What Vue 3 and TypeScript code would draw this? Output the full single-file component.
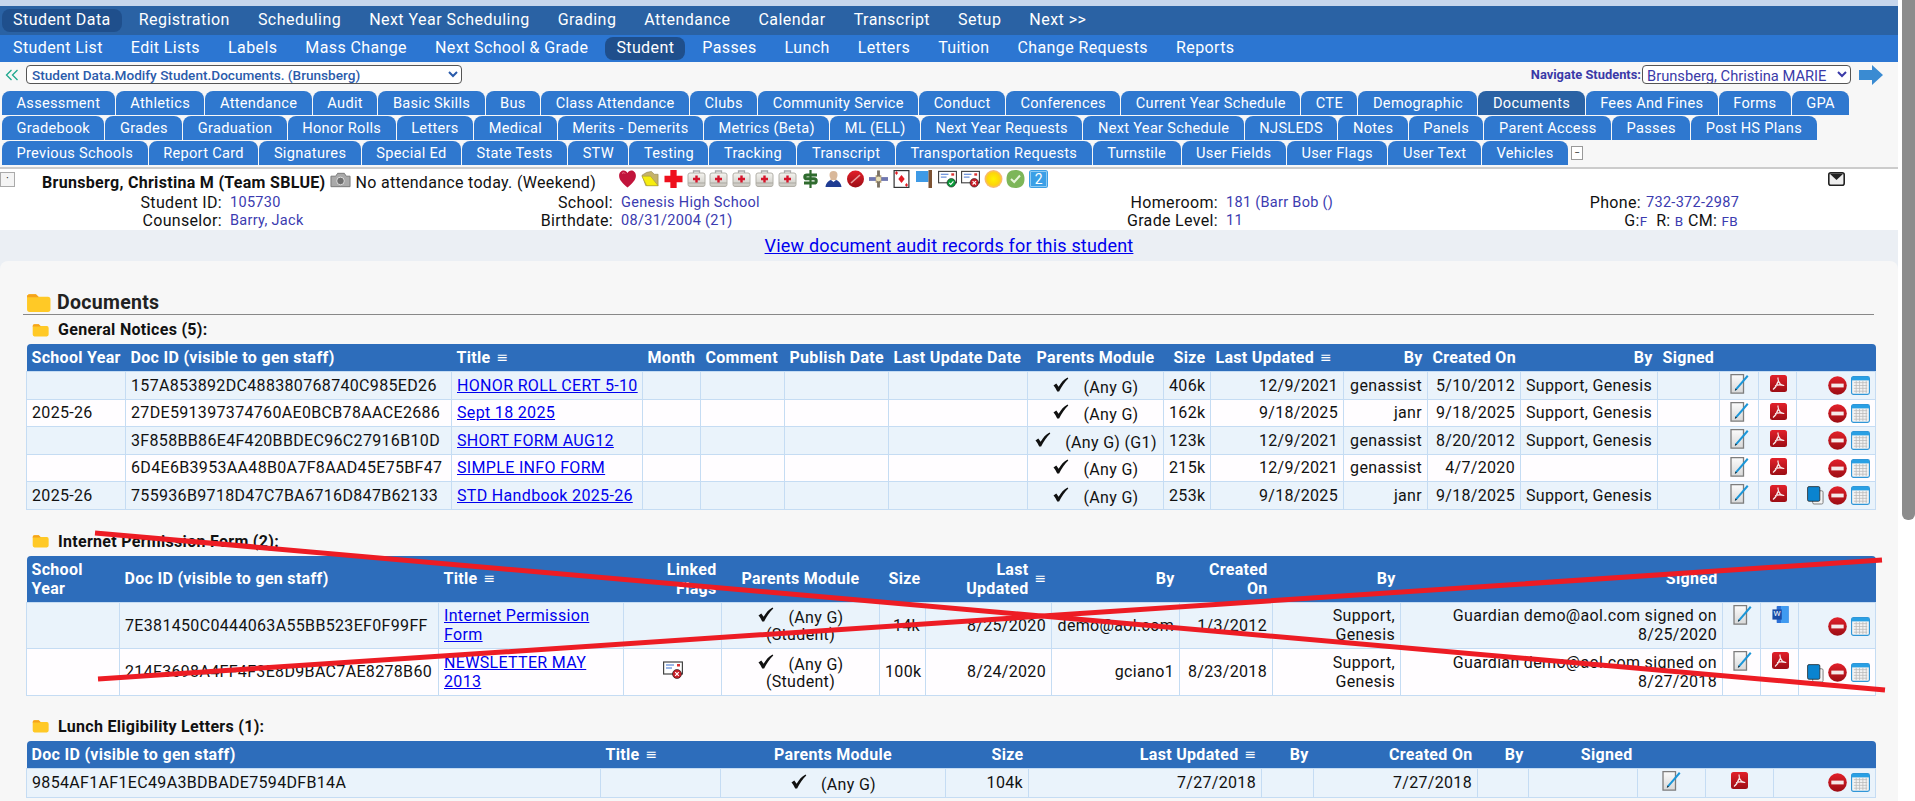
<script setup lang="ts">
type Cell = { t?: string; link?: boolean; parents?: string; extra?: string; shift?: boolean; icons?: string[]; flag?: boolean }
type Col = { label: string; w: number; h?: string; b?: string; sort?: boolean }
type DocTable = { name: string; cols: Col[]; rows: Cell[][]; cls: string }

const nav1 = ['Student Data', 'Registration', 'Scheduling', 'Next Year Scheduling', 'Grading', 'Attendance', 'Calendar', 'Transcript', 'Setup', 'Next >>']
const nav2 = ['Student List', 'Edit Lists', 'Labels', 'Mass Change', 'Next School & Grade', 'Student', 'Passes', 'Lunch', 'Letters', 'Tuition', 'Change Requests', 'Reports']
const tabRows = [
  ['Assessment', 'Athletics', 'Attendance', 'Audit', 'Basic Skills', 'Bus', 'Class Attendance', 'Clubs', 'Community Service', 'Conduct', 'Conferences', 'Current Year Schedule', 'CTE', 'Demographic', 'Documents', 'Fees And Fines', 'Forms', 'GPA'],
  ['Gradebook', 'Grades', 'Graduation', 'Honor Rolls', 'Letters', 'Medical', 'Merits - Demerits', 'Metrics (Beta)', 'ML (ELL)', 'Next Year Requests', 'Next Year Schedule', 'NJSLEDS', 'Notes', 'Panels', 'Parent Access', 'Passes', 'Post HS Plans'],
  ['Previous Schools', 'Report Card', 'Signatures', 'Special Ed', 'State Tests', 'STW', 'Testing', 'Tracking', 'Transcript', 'Transportation Requests', 'Turnstile', 'User Fields', 'User Flags', 'User Text', 'Vehicles'],
]
const flagIcons = ['heart', 'folderY', 'cross', 'kit', 'kit', 'kit', 'kit', 'kit', 'dollar', 'person', 'nope', 'sat', 'card', 'flag', 'mailOk', 'mailNo', 'sun', 'okay', 'two']

const t = (s = ''): Cell => ({ t: s })
const a = (s: string): Cell => ({ t: s, link: true })
const p = (extra = '', shift = false): Cell => ({ parents: '(Any G)' + (shift ? ' (G1)' : ''), extra })
const ic = (...n: string[]): Cell => ({ icons: n })

const std = (yr: string, id: string, title: string, par: Cell, size: string, lu: string, by: string, co: string, by2: string, copy = false): Cell[] => [
  t(yr), t(id), a(title), t(), t(), t(), t(), par, t(size), t(lu), t(by), t(co), t(by2), t(),
  ic('edit'), ic('pdf'), ic(...(copy ? ['copy', 'minus', 'cal'] : ['minus', 'cal'])),
]

const tables: DocTable[] = [
  {
    name: 'General Notices (5):',
    cls: 'first',
    cols: [
      { label: 'School Year', w: 99 }, { label: 'Doc ID (visible to gen staff)', w: 326 }, { label: 'Title', w: 191, sort: true },
      { label: 'Month', w: 58 }, { label: 'Comment', w: 84 }, { label: 'Publish Date', w: 104 }, { label: 'Last Update Date', w: 139 },
      { label: 'Parents Module', w: 136, h: 'c', b: 'c' }, { label: 'Size', w: 47, h: 'r', b: 'r' }, { label: 'Last Updated', w: 133, b: 'r', sort: true },
      { label: 'By', w: 84, h: 'r', b: 'r' }, { label: 'Created On', w: 93, b: 'r' }, { label: 'By', w: 137, h: 'r' }, { label: 'Signed', w: 62 },
      { label: '', w: 39 }, { label: '', w: 38 }, { label: '', w: 79, b: 'r' },
    ],
    rows: [
      std('', '157A853892DC488380768740C985ED26', 'HONOR ROLL CERT 5-10', p(), '406k', '12/9/2021', 'genassist', '5/10/2012', 'Support, Genesis'),
      std('2025-26', '27DE591397374760AE0BCB78AACE2686', 'Sept 18 2025', p(), '162k', '9/18/2025', 'janr', '9/18/2025', 'Support, Genesis'),
      std('', '3F858BB86E4F420BBDEC96C27916B10D', 'SHORT FORM AUG12', p('', true), '123k', '12/9/2021', 'genassist', '8/20/2012', 'Support, Genesis'),
      std('', '6D4E6B3953AA48B0A7F8AAD45E75BF47', 'SIMPLE INFO FORM', p(), '215k', '12/9/2021', 'genassist', '4/7/2020', ''),
      std('2025-26', '755936B9718D47C7BA6716D847B62133', 'STD Handbook 2025-26', p(), '253k', '9/18/2025', 'janr', '9/18/2025', 'Support, Genesis', true),
    ],
  },
  {
    name: 'Internet Permission Form (2):',
    cls: 'second',
    cols: [
      { label: 'School\nYear', w: 93 }, { label: 'Doc ID (visible to gen staff)', w: 319 }, { label: 'Title', w: 185, sort: true },
      { label: 'Linked\nFlags', w: 98, h: 'r', b: 'c' }, { label: 'Parents Module', w: 158, h: 'c', b: 'c' }, { label: 'Size', w: 46, h: 'r', b: 'r' },
      { label: 'Last\nUpdated', w: 126, h: 'r', b: 'r', sort: true }, { label: 'By', w: 128, h: 'r', b: 'r' }, { label: 'Created\nOn', w: 93, h: 'r', b: 'r' },
      { label: 'By', w: 128, h: 'r', b: 'r' }, { label: 'Signed', w: 322, h: 'r', b: 'r' }, { label: '', w: 38 }, { label: '', w: 38 }, { label: '', w: 77, b: 'r' },
    ],
    rows: [
      [t(), t('7E381450C0444063A55BB523EF0F99FF'), a('Internet Permission Form'), t(), p('(Student)'), t('14k'), t('8/25/2020'), t('demo@aol.com'), t('1/3/2012'), t('Support, Genesis'), t('Guardian demo@aol.com signed on 8/25/2020'), ic('edit'), ic('word'), ic('minus', 'cal')],
      [t(), t('214F3698A4FF4F3E8D9BAC7AE8278B60'), a('NEWSLETTER MAY 2013'), { flag: true }, p('(Student)'), t('100k'), t('8/24/2020'), t('gciano1'), t('8/23/2018'), t('Support, Genesis'), t('Guardian demo@aol.com signed on 8/27/2018'), ic('edit'), ic('pdf'), ic('copy', 'minus', 'cal')],
    ],
  },
  {
    name: 'Lunch Eligibility Letters (1):',
    cls: 'third',
    cols: [
      { label: 'Doc ID (visible to gen staff)', w: 574 }, { label: 'Title', w: 120, sort: true }, { label: 'Parents Module', w: 225, h: 'c', b: 'c' },
      { label: 'Size', w: 83, h: 'r', b: 'r' }, { label: 'Last Updated', w: 233, h: 'r', b: 'r', sort: true }, { label: 'By', w: 52, h: 'r' },
      { label: 'Created On', w: 164, h: 'r', b: 'r' }, { label: 'By', w: 51, h: 'r' }, { label: 'Signed', w: 109, h: 'r' },
      { label: '', w: 68, b: 'c' }, { label: '', w: 68, b: 'c' }, { label: '', w: 102, b: 'r' },
    ],
    rows: [
      [t('9854AF1AF1EC49A3BDBADE7594DFB14A'), t(), p(), t('104k'), t('7/27/2018'), t(), t('7/27/2018'), t(), t(), ic('edit'), ic('pdf'), ic('minus', 'cal')],
    ],
  },
]
</script>

<template>
  <div class="shell">
    <svg class="sprites" aria-hidden="true">
      <defs>
        <linearGradient id="gRed" x1="0" y1="0" x2="0" y2="1"><stop offset="0" stop-color="#e2202a" /><stop offset="1" stop-color="#9c0d14" /></linearGradient>
        <linearGradient id="gKit" x1="0" y1="0" x2="0" y2="1"><stop offset="0" stop-color="#f4f4f0" /><stop offset="1" stop-color="#c9c7c0" /></linearGradient>
        <linearGradient id="gGray" x1="0" y1="0" x2="0" y2="1"><stop offset="0" stop-color="#fbfbfb" /><stop offset="1" stop-color="#d8d8d8" /></linearGradient>
        <radialGradient id="gSun"><stop offset="0" stop-color="#fff200" /><stop offset=".7" stop-color="#fdd40c" /><stop offset="1" stop-color="#f6b38c" /></radialGradient>
      </defs>
      <symbol id="heart" viewBox="0 0 18 18"><path d="M9 17.5C4 13 .6 10 .6 5.7.6 2.6 3 .6 5.2.6 6.900 .6 8.200 1.500 9 3c.8-1.500 2.100-2.400 3.800-2.400 2.200 0 4.600 2 4.600 5.100C17.400 10 14 13 9 17.500z" fill="#c1143b" /><path d="M3.500 3.500c1-1 2.500-1 3 0" stroke="#ef7a90" fill="none" /></symbol>
      <symbol id="folderY" viewBox="0 0 20 18"><path d="M1 5l5-3 5-1 3 3h4v12H5z" fill="#c4b26a" stroke="#8e8250" stroke-width=".6" /><path d="M1 6h9l8 10H6z" fill="#f7ee0f" stroke="#a69a2c" stroke-width=".6" /></symbol>
      <symbol id="cross" viewBox="0 0 20 20"><path d="M6.500 0h7v6.500H20v7h-6.500V20h-7v-6.500H0v-7h6.500z" fill="#ee0f1c" /></symbol>
      <symbol id="kit" viewBox="0 0 18 18"><path d="M6 3V1h6v2" fill="none" stroke="#aaa" stroke-width="1.300" /><rect x=".5" y="3" width="17" height="13.500" rx="2" fill="url(#gKit)" stroke="#b2b0a8" /><path d="M.5 13h17" stroke="#a9a79f" /><path d="M7.800 5.500h2.400v2.300h2.300v2.400h-2.300v2.300H7.800v-2.300H5.500V7.800h2.300z" fill="#d5152b" /></symbol>
      <symbol id="dollar" viewBox="0 0 18 18"><path d="M9 0v18" stroke="#2f6b2e" stroke-width="2.200" /><path d="M15.500 5H5.500c-3 0-3 3.800 0 3.800h7c3 0 3 4.200 0 4.200H2.500" fill="none" stroke="#2f6b2e" stroke-width="3" /></symbol>
      <symbol id="person" viewBox="0 0 16 18"><circle cx="8" cy="5" r="4" fill="#d9b89a" /><path d="M5 7h6v3H5z" fill="#d9b89a" /><path d="M0 17c.5-4 3-6.500 5.500-7L8 12l2.500-2c2.500.5 5 3 5.500 7z" fill="#1f3c93" /></symbol>
      <symbol id="nope" viewBox="0 0 18 18"><circle cx="9" cy="9" r="8.500" fill="url(#gRed)" /><path d="M4.500 13L13.500 5" stroke="#e9a0a0" stroke-width="1.600" /></symbol>
      <symbol id="sat" viewBox="0 0 20 18"><rect x="0" y="7" width="20" height="4" fill="#6f77b0" /><rect x="7" y="5" width="6" height="8" fill="#b5a27a" /><rect x="8.500" y="0" width="3" height="18" fill="#7b7263" /><circle cx="10" cy="9" r="2.600" fill="#e9dfb6" /></symbol>
      <symbol id="card" viewBox="0 0 16 18"><rect x=".6" y=".6" width="14.800" height="16.800" fill="#fff" stroke="#333" stroke-width="1.200" /><path d="M8 5l3.200 4L8 13 4.800 9z" fill="#e31b23" /><path d="M3 1l1.500 2L3 5 1.500 3zM13 13l1.500 2-1.500 2-1.500-2z" fill="#e31b23" /></symbol>
      <symbol id="flag" viewBox="0 0 18 18"><rect x=".5" y="1" width="12.500" height="11" fill="#3e9ae6" /><rect x="13" y="0" width="3.500" height="18" fill="#7c5233" /></symbol>
      <symbol id="mailOk" viewBox="0 0 20 18"><rect x=".6" y="1" width="18.800" height="12" fill="#fff" stroke="#444" stroke-width="1.200" /><path d="M3 4h8M3 7h6" stroke="#3b6fd0" /><rect x="14" y="3" width="3" height="2.500" fill="#d33" /><circle cx="14" cy="13" r="4.500" fill="#0b9a3a" stroke="#111" stroke-width=".6" /><path d="M11.800 13l1.600 1.600 2.800-3" stroke="#fff" fill="none" stroke-width="1.200" /></symbol>
      <symbol id="mailNo" viewBox="0 0 20 18"><rect x=".6" y="1" width="18.800" height="12" fill="#fff" stroke="#444" stroke-width="1.200" /><path d="M3 4h8M3 7h6" stroke="#3b6fd0" /><rect x="14" y="3" width="3" height="2.500" fill="#d33" /><circle cx="14" cy="13" r="4.500" fill="#c81e28" stroke="#111" stroke-width=".6" /><path d="M12.200 11.200l3.600 3.600m0-3.600l-3.600 3.600" stroke="#fff" stroke-width="1.200" /></symbol>
      <symbol id="sun" viewBox="0 0 18 18"><circle cx="9" cy="9" r="9" fill="url(#gSun)" /></symbol>
      <symbol id="okay" viewBox="0 0 18 18"><path d="M9 0c6 0 9 3 9 9s-3 9-9 9-9-3-9-9 3-9 9-9z" fill="#7db659" /><path d="M4.500 9l3.200 3 5.800-6.500" stroke="#e8f5dc" stroke-width="2" fill="none" /></symbol>
      <symbol id="two" viewBox="0 0 19 18"><rect width="19" height="18" rx="2.500" fill="#3b9fe6" /><path d="M1.500 1.500h16v15h-16z" fill="none" stroke="#8fcbf3" /></symbol>
      <symbol id="camera" viewBox="0 0 22 18"><path d="M1 5h5l2-3h7l2 3h4v11H1z" fill="#a9a9a9" stroke="#777" /><circle cx="11" cy="10" r="4" fill="#6f6f6f" stroke="#ddd" /></symbol>
      <symbol id="envelope" viewBox="0 0 17 14"><rect x=".8" y=".8" width="15.400" height="12.400" rx="2" fill="#eee" stroke="#222" stroke-width="1.600" /><path d="M1.500 1.500h14L8.500 8z" fill="#222" /></symbol>
      <symbol id="edit" viewBox="0 0 20 20"><path d="M1 .7h12.500v18.500H1z" fill="url(#gGray)" stroke="#7d7d7d" stroke-width="1.300" /><path d="M5.500 14.500l-.7 2.300 2.200-1L18.500 2.500 17 1z" fill="#1b96d8" /><path d="M4.800 16.800l.7-2.300 1.500 1.300z" fill="#222" /></symbol>
      <symbol id="pdf" viewBox="0 0 17 17"><rect width="17" height="17" rx="2.500" fill="url(#gRed)" /><path d="M8 2.500c-.3 2.500 1 5 2.300 6.500 1.300 1.200 3 1.200 4 1.500M8 6.500C7 10 5 13 3 14.500M5 10.500c2.500-.8 5-1 8.500-.2" fill="none" stroke="#f7e9e9" stroke-width="1.200" /></symbol>
      <symbol id="word" viewBox="0 0 19 20"><rect x="5" y="0" width="14" height="20" rx="1" fill="#2b6fd6" /><rect x="10" y="0" width="9" height="20" fill="#3f9af0" /><rect x="0" y="4" width="11" height="12" fill="#1a4da6" /></symbol>
      <symbol id="minus" viewBox="0 0 20 20"><circle cx="10" cy="10" r="9.800" fill="url(#gRed)" /><rect x="3.500" y="8" width="13" height="4" fill="#f5eaea" /></symbol>
      <symbol id="cal" viewBox="0 0 20 20"><rect x=".6" y=".6" width="18.800" height="18.800" rx="2" fill="#f3f3f3" stroke="#2f96d8" stroke-width="1.200" /><rect x="1" y="1" width="18" height="3.600" fill="#29a0e4" /><path d="M3 7h14M3 10h14M3 13h14M3 16h14M5.500 5v13M9 5v13M12.500 5v13M16 5v13" stroke="#b9b9b9" stroke-width=".8" /></symbol>
      <symbol id="copy" viewBox="0 0 18 20"><rect x="6" y="5" width="11" height="14" rx="1.500" fill="#f4f4f4" stroke="#777" /><rect x=".6" y=".6" width="13" height="15.500" rx="1.500" fill="#0a84d0" stroke="#222" stroke-width=".8" /></symbol>
      <symbol id="check" viewBox="0 0 18 16"><path d="M1.500 9l3-2 2.500 3.500C9.500 6 12.500 2.500 16.500.5l.8 1.200C13.500 5.500 10 10.500 7.500 15.500h-2C4.500 13 3 10.800 1.500 9z" fill="#111" /></symbol>
      <symbol id="folderBig" viewBox="0 0 24 18"><path d="M1 3.500A2.500 2.500 0 0 1 3.500 1h6l2.500 2.500h9A2.500 2.500 0 0 1 23.500 6v9.500a2.500 2.500 0 0 1-2.500 2.500H3.500A2.500 2.500 0 0 1 1 15.500z" fill="#ffc926" /><path d="M1 4V3.500A2.500 2.500 0 0 1 3.500 1h6l2.500 2.500v.5z" fill="#f5a31c" /></symbol>
      <symbol id="goArrow" viewBox="0 0 24 20"><path d="M0 5h13V0l11 10-11 10v-5H0z" fill="#3a8bd2" /></symbol>
      <symbol id="backArrows" viewBox="0 0 14 12"><path d="M6.500 1L1.500 6l5 5M12.500 1L7.500 6l5 5" fill="none" stroke="#1fa88e" stroke-width="1.300" /></symbol>
    </svg>

    <div class="page">
      <div class="topband"></div>
      <nav class="nav nav-one">
        <a v-for="(n, i) in nav1" :key="n" class="nav-item" :class="{ on: i === 0 }">{{ n }}</a>
      </nav>
      <nav class="nav nav-two">
        <a v-for="(n, i) in nav2" :key="n" class="nav-item" :class="{ on: i === 5 }">{{ n }}</a>
      </nav>

      <div class="crumbs">
        <svg class="back" width="14" height="12"><use href="#backArrows" /></svg>
        <select class="crumb-select"><option>Student Data.Modify Student.Documents. (Brunsberg)</option></select>
        <span class="spacer"></span>
        <label class="nav-label">Navigate Students:</label>
        <select class="student-select"><option>Brunsberg, Christina MARIE</option></select>
        <svg class="go" width="24" height="20"><use href="#goArrow" /></svg>
      </div>

      <div class="tabs">
        <div v-for="(row, r) in tabRows" :key="r" class="tab-row">
          <a v-for="tab in row" :key="tab" class="tab" :class="{ on: tab === 'Documents' }">{{ tab }}</a>
          <span v-if="r === 2" class="collapse">−</span>
        </div>
      </div>

      <section class="student">
        <span class="dotbox">·</span>
        <div class="name-line">
          <strong class="name">Brunsberg, Christina M (Team SBLUE)</strong>
          <svg class="camera" width="21" height="18"><use href="#camera" /></svg>
          <span class="attend">No attendance today. (Weekend)</span>
          <span class="flags">
            <span v-for="(f, i) in flagIcons" :key="i" class="flag-cell">
              <svg width="19" height="18"><use :href="'#' + f" /></svg>
              <b v-if="f === 'two'" class="two-num">2</b>
            </span>
          </span>
          <svg class="envelope" width="17" height="14"><use href="#envelope" /></svg>
        </div>
        <div class="facts">
          <span class="lab">Student ID:</span><span class="val">105730</span>
          <span class="lab">School:</span><span class="val">Genesis High School</span>
          <span class="lab">Homeroom:</span><span class="val">181 (Barr Bob ()</span>
          <span class="lab">Phone:</span><span class="val tight">732-372-2987</span>
          <span class="lab">Counselor:</span><span class="val">Barry, Jack</span>
          <span class="lab">Birthdate:</span><span class="val">08/31/2004 (21)</span>
          <span class="lab">Grade Level:</span><span class="val">11</span>
          <span class="lab gr">G:<i>F</i>&nbsp; R: <i>B</i> CM: <i>FB</i></span>
        </div>
      </section>

      <div class="audit"><a class="audit-link" href="#">View document audit records for this student</a></div>

      <main class="docs">
        <h1 class="title"><svg width="25" height="19"><use href="#folderBig" /></svg>Documents</h1>
        <div v-for="tb in tables" :key="tb.name" class="group" :class="tb.cls">
          <h2 class="group-name"><svg width="17" height="14"><use href="#folderBig" /></svg>{{ tb.name }}</h2>
          <table class="grid">
            <colgroup><col v-for="(c, i) in tb.cols" :key="i" :style="{ width: c.w + 'px' }" /></colgroup>
            <thead>
              <tr>
                <th v-for="(c, i) in tb.cols" :key="i" :class="c.h"><span v-if="c.sort" class="th-in"><span>{{ c.label }}</span><span class="sort">≡</span></span><template v-else>{{ c.label }}</template></th>
              </tr>
            </thead>
            <tbody>
              <tr v-for="(row, ri) in tb.rows" :key="ri" :class="ri % 2 ? 'even' : 'odd'">
                <td v-for="(c, ci) in row" :key="ci" :class="[tb.cols[ci].b, { ic: c.icons }]">
                  <a v-if="c.link" class="doc-link" href="#">{{ c.t }}</a>
                  <template v-else-if="c.parents">
                    <svg class="check" width="17" height="15"><use href="#check" /></svg><span class="any">{{ c.parents }}</span>
                    <template v-if="c.extra"><br /><span class="stud">{{ c.extra }}</span></template>
                  </template>
                  <svg v-else-if="c.flag" width="20" height="18"><use href="#mailNo" /></svg>
                  <span v-else-if="c.icons" class="row-icons">
                    <template v-for="(n, k) in c.icons" :key="k">
                      <svg :class="'i-' + n"><use :href="'#' + n" /></svg>
                      <b v-if="n === 'word'" class="w-mark">W</b>
                    </template>
                  </span>
                  <template v-else>{{ c.t }}</template>
                </td>
              </tr>
            </tbody>
          </table>
        </div>
      </main>
      <svg class="strike" width="1898" height="801" aria-hidden="true">
        <path d="M95 533L1885 690M98 679L1882 560" stroke="#ed1c24" stroke-width="5" fill="none" />
      </svg>
    </div>

    <aside class="rail"><div class="thumb"></div></aside>
  </div>
</template>

<style>
html, body { margin: 0; height: 100%; overflow: hidden; background: #fff; }
</style>

<style scoped>
.shell { display: flex; width: 1915px; height: 801px; overflow: hidden; font-family: Roboto, "Liberation Sans", sans-serif; font-size: 16px; color: #111; letter-spacing: .33px; }
.sprites { position: absolute; width: 0; height: 0; }
.page { width: 1898px; flex: none; position: relative; background: #ebeff4; }
.rail { width: 17px; flex: none; background: #fff; padding-left: 4px; box-sizing: border-box; }
.thumb { width: 13px; height: 520px; background: #8c8c8c; border-radius: 0 0 6px 6px; }
.topband { height: 6px; background: #c6d6ec; }
.nav { display: flex; align-items: center; padding-left: 2px; color: #fff; font-size: 16px; }
.nav-one { height: 29px; background: #2a62a4; letter-spacing: .46px; }
.nav-two { height: 27px; background: #2c76d2; letter-spacing: .39px; }
.nav-item { padding: 2px 11px 4px; margin-right: 6px; border-radius: 8px; line-height: 17px; white-space: nowrap; }
.nav-item.on { background: #1f4f8c; }
.crumbs { display: flex; align-items: center; height: 25px; padding-left: 5px; padding-right: 15px; box-sizing: border-box; background: #f7f7f7; }
.back { margin-right: 7px; }
.crumb-select { width: 436px; height: 19px; font: 500 13.600px Roboto, sans-serif; color: #2a5bab; background: #fff; border: 1px solid #555; border-radius: 4px; padding: 0 1px; }
.spacer { flex: 1; }
.nav-label { font-size: 12.900px; font-weight: 700; color: #3a3aa8; letter-spacing: 0; margin-right: 1px; }
.student-select { width: 209px; height: 19px; font: 14.700px Roboto, sans-serif; color: #3a3aa8; background: #fff; border: 1px solid #555; border-radius: 4px; padding: 0; }
.go { margin-left: 8px; }
.tabs { padding: 4px 0 3px 2px; border-bottom: 2px solid #ccc; height: 73px; background: #f7f7f7; }
.tab-row { display: flex; align-items: flex-start; gap: 1px; height: 25px; }
.tab { height: 24px; line-height: 24px; padding: 0 14.500px; color: #fff; background: #2f78cf; border-radius: 8px 8px 0 0; font-size: 14.600px; letter-spacing: .3px; white-space: nowrap; }
.tab.on { background: #2a62a4; }
.collapse { margin: 5px 0 0 2px; width: 10px; height: 12px; line-height: 11px; text-align: center; border: 1px solid #999; background: #fff; color: #333; font-size: 10px; letter-spacing: 0; }
.student { position: relative; background: #fff; height: 61px; padding: 2px 0 0 42px; box-sizing: border-box; }
.dotbox { position: absolute; left: 0; top: 3px; width: 13px; height: 13px; border: 1px solid #aaa; line-height: 12px; text-align: center; font-size: 11px; background: #f4f4f4; letter-spacing: 0; }
.name-line { display: flex; align-items: center; height: 23px; white-space: nowrap; }
.name { font-weight: 700; letter-spacing: .3px; }
.camera { margin: -6px 0 0 5px; }
.attend { margin-left: 4px; letter-spacing: .3px; }
.flags { display: flex; position: absolute; left: 618px; top: 1px; }
.flag-cell { position: relative; width: 22.850px; height: 18px; }
.two-num { position: absolute; left: 0; width: 19px; top: 0; line-height: 18px; text-align: center; color: #fff; font-size: 14px; font-weight: 400; letter-spacing: 0; }
.envelope { position: absolute; left: 1828px; top: 3px; }
.facts { display: grid; grid-template-columns: 180px 278px 113px 487px 118px 302px 121px 97px; line-height: 18px; white-space: nowrap; }
.lab { text-align: right; }
.val { padding-left: 8px; color: #3b3bb0; font-size: 14.500px; letter-spacing: .3px; }
.val.tight { padding-left: 5px; }
.gr { grid-column: 7 / span 2; }
.gr i { font-style: normal; color: #3b3bb0; font-size: 13.500px; }
.audit { height: 31px; line-height: 31px; text-align: center; font-size: 18px; letter-spacing: .2px; }
.audit-link { color: #0000ee; }
.docs { padding: 30px 24px 0 23px; height: 540px; box-sizing: border-box; overflow: hidden; background: #f7f7f7; border-radius: 8px 8px 0 0; }
.title { margin: 0; display: flex; align-items: center; gap: 6px; font-size: 19.500px; font-weight: 700; height: 23px; border-bottom: 1px solid #888; padding: 0 0 0 3px; letter-spacing: .3px; color: #222; }
.group-name { margin: 0; display: flex; align-items: center; gap: 9px; font-size: 16px; font-weight: 700; height: 29px; padding-left: 9px; letter-spacing: .3px; }
.group.second { margin-top: 17px; }
.group.third { margin-top: 16px; }
.grid { margin-left: 3px; width: 1849px; table-layout: fixed; border-collapse: collapse; }
.grid th { background: #2d6dbb; color: #fff; font-weight: 700; font-size: 16px; text-align: left; padding: 0 5px; line-height: 19px; height: 27px; letter-spacing: .3px; white-space: pre; }
.grid th:first-child { border-top-left-radius: 4px; }
.grid th:last-child { border-top-right-radius: 4px; }
.grid th.r { text-align: right; }
.grid th.c { text-align: center; }
.th-in { display: inline-flex; align-items: center; gap: 6px; }
.sort { font-family: "DejaVu Sans", sans-serif; font-weight: 400; font-size: 14px; }
.grid td { border: 1px solid #c5dcf3; padding: 0 5px; line-height: 19px; height: 24.500px; text-align: left; }
.first .grid td, .third .grid td { white-space: nowrap; }
.third .grid td { height: 26px; }
.grid td.r { text-align: right; }
.grid td.c { text-align: center; }
.grid td.ic { vertical-align: top; padding-top: 2px; line-height: 0; }
.odd td { background: #eaf3fb; }
.even td { background: #fffdff; }
.second .grid th { height: 46px; }
.second .grid td { height: 43.500px; }
.doc-link { color: #0000ee; text-decoration: underline; }
.check { vertical-align: -1px; margin-right: 14px; }
.any { position: relative; top: 2px; }
.row-icons { position: relative; display: inline-flex; gap: 4px; align-items: flex-start; }
.w-mark { position: absolute; left: 7.500px; top: 4px; font-size: 8px; line-height: 10px; color: #fff; font-weight: 400; letter-spacing: 0; }
.i-edit { width: 20px; height: 20px; margin-left: 5px; }
.i-pdf, .i-word { width: 17px; height: 17px; margin: 1px 0 0 6px; }
.i-minus, .i-cal { width: 19px; height: 19px; margin-top: 2px; }
.i-copy { width: 17px; height: 19px; margin-top: 2px; }
.second .i-minus, .second .i-cal { margin-top: 12px; }
.second .i-copy { margin-top: 13px; }
.third .i-edit, .third .i-pdf { margin-left: 0; }
.strike { position: absolute; left: 0; top: 0; pointer-events: none; }
</style>
